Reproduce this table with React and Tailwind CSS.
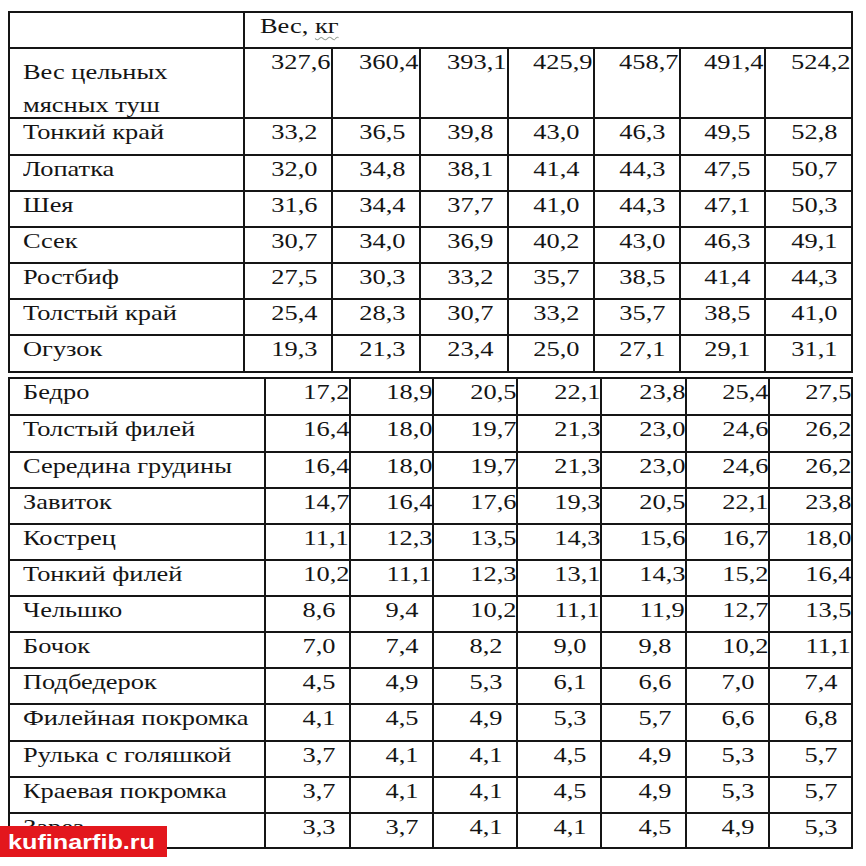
import React from "react";

const top = [
  ["Тонкий край", ["33,2", "36,5", "39,8", "43,0", "46,3", "49,5", "52,8"]],
  ["Лопатка", ["32,0", "34,8", "38,1", "41,4", "44,3", "47,5", "50,7"]],
  ["Шея", ["31,6", "34,4", "37,7", "41,0", "44,3", "47,1", "50,3"]],
  ["Ссек", ["30,7", "34,0", "36,9", "40,2", "43,0", "46,3", "49,1"]],
  ["Ростбиф", ["27,5", "30,3", "33,2", "35,7", "38,5", "41,4", "44,3"]],
  ["Толстый край", ["25,4", "28,3", "30,7", "33,2", "35,7", "38,5", "41,0"]],
  ["Огузок", ["19,3", "21,3", "23,4", "25,0", "27,1", "29,1", "31,1"]],
];

const carcass = ["327,6", "360,4", "393,1", "425,9", "458,7", "491,4", "524,2"];

const bottom = [
  ["Бедро", ["17,2", "18,9", "20,5", "22,1", "23,8", "25,4", "27,5"]],
  ["Толстый филей", ["16,4", "18,0", "19,7", "21,3", "23,0", "24,6", "26,2"]],
  ["Середина грудины", ["16,4", "18,0", "19,7", "21,3", "23,0", "24,6", "26,2"]],
  ["Завиток", ["14,7", "16,4", "17,6", "19,3", "20,5", "22,1", "23,8"]],
  ["Кострец", ["11,1", "12,3", "13,5", "14,3", "15,6", "16,7", "18,0"]],
  ["Тонкий филей", ["10,2", "11,1", "12,3", "13,1", "14,3", "15,2", "16,4"]],
  ["Чельшко", ["8,6", "9,4", "10,2", "11,1", "11,9", "12,7", "13,5"]],
  ["Бочок", ["7,0", "7,4", "8,2", "9,0", "9,8", "10,2", "11,1"]],
  ["Подбедерок", ["4,5", "4,9", "5,3", "6,1", "6,6", "7,0", "7,4"]],
  ["Филейная покромка", ["4,1", "4,5", "4,9", "5,3", "5,7", "6,6", "6,8"]],
  ["Рулька с голяшкой", ["3,7", "4,1", "4,1", "4,5", "4,9", "5,3", "5,7"]],
  ["Краевая покромка", ["3,7", "4,1", "4,1", "4,5", "4,9", "5,3", "5,7"]],
  ["Зарез", ["3,3", "3,7", "4,1", "4,1", "4,5", "4,9", "5,3"]],
];

function Label({ children }) {
  return (
    <div className="bg-white pl-[13px] leading-[26px] whitespace-nowrap">
      <span className="inline-block origin-left scale-x-[1.2]">{children}</span>
    </div>
  );
}

function TopVal({ children }) {
  return (
    <div className="bg-white text-right pr-[14px] leading-[26px] whitespace-nowrap">
      <span className="inline-block origin-right scale-x-[1.2]">{children}</span>
    </div>
  );
}

function BottomVal({ children }) {
  const small = children.split(",")[0].length < 2;
  return (
    <div
      className={
        small
          ? "bg-white text-right pr-[14px] leading-[26px] whitespace-nowrap"
          : "bg-white text-right pr-0 leading-[26px] whitespace-nowrap"
      }
    >
      <span className="inline-block origin-right scale-x-[1.2]">{children}</span>
    </div>
  );
}

export default function App() {
  return (
    <div className="relative w-[866px] h-[866px] overflow-hidden bg-white text-[22px] text-[#141414] font-['Liberation_Serif','Times_New_Roman',serif]">
      <div className="pt-[11px] pl-[8px]">
        <div className="grid w-[845px] grid-cols-[233px_86px_86px_86px_84px_84px_83px_85px] grid-rows-[34px_68px_35px_34px_34px_34px_34px_34px_35px] gap-[2px] bg-[#151515] p-[2px]">
          <div className="bg-white" />
          <div className="col-span-7 bg-white pl-[15px] leading-[26px]">
            <span className="inline-block origin-left scale-x-[1.2]">
              Вес,{" "}
              <span className="underline decoration-wavy decoration-[#9aa39a] decoration-1 underline-offset-[3px]">
                кг
              </span>
            </span>
          </div>

          <div className="bg-white pl-[13px] pt-[6px] leading-[33px] whitespace-nowrap">
            <span className="inline-block origin-left scale-x-[1.2]">Вес цельных</span>
            <br />
            <span className="inline-block origin-left scale-x-[1.2]">мясных туш</span>
          </div>
          {carcass.map((v) => (
            <div key={v} className="bg-white text-right pr-[1px] leading-[26px] whitespace-nowrap">
              <span className="inline-block origin-right scale-x-[1.2]">{v}</span>
            </div>
          ))}

          {top.map(([name, vals]) => (
            <React.Fragment key={name}>
              <Label>{name}</Label>
              {vals.map((v, i) => (
                <TopVal key={i}>{v}</TopVal>
              ))}
            </React.Fragment>
          ))}
        </div>

        <div className="mt-[4px] grid w-[845px] grid-cols-[254px_83px_81px_82px_82px_83px_81px_81px] grid-rows-[35px_35px_34px_34px_34px_34px_34px_34px_34px_35px_34px_34px_33px] gap-[2px] bg-[#151515] p-[2px]">
          {bottom.map(([name, vals]) => (
            <React.Fragment key={name}>
              <Label>{name}</Label>
              {vals.map((v, i) => (
                <BottomVal key={i}>{v}</BottomVal>
              ))}
            </React.Fragment>
          ))}
        </div>
      </div>

      <div className="absolute left-0 top-[826px] flex h-[31px] w-[167px] items-center bg-[#e3171d] pl-[8px]">
        <span className="inline-block origin-left scale-x-[1.2] font-['Liberation_Sans',Arial,sans-serif] text-[21px] font-bold leading-none text-white">
          kufinarfib.ru
        </span>
      </div>
    </div>
  );
}
